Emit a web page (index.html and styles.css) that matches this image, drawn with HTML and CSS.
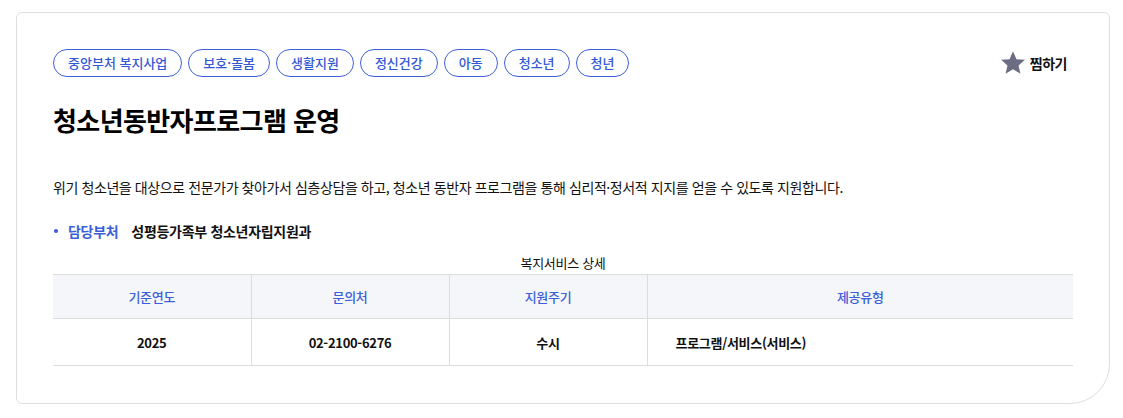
FILE: index.html
```html
<!DOCTYPE html>
<html lang="ko">
<head>
<meta charset="utf-8">
<link rel="stylesheet" href="styles.css">
</head>
<body>
<div class="card">
  <div class="top">
    <ul class="tags">
      <li class="tag">중앙부처 복지사업</li>
      <li class="tag">보호·돌봄</li>
      <li class="tag">생활지원</li>
      <li class="tag">정신건강</li>
      <li class="tag">아동</li>
      <li class="tag">청소년</li>
      <li class="tag">청년</li>
    </ul>
    <button class="fav" type="button">
      <svg class="star" width="26" height="26" viewBox="0 0 24 24"><path d="M12 1.2l3.2 7.3 7.8.6-5.9 5.1 1.8 7.7L12 17.8l-6.9 4.1 1.8-7.7-5.9-5.1 7.8-.6z" fill="#6b6e82"/></svg>
      <span>찜하기</span>
    </button>
  </div>
  <h1 class="title">청소년동반자프로그램 운영</h1>
  <p class="desc">위기 청소년을 대상으로 전문가가 찾아가서 심층상담을 하고, 청소년 동반자 프로그램을 통해 심리적·정서적 지지를 얻을 수 있도록 지원합니다.</p>
  <div class="dept">
    <span class="dot"></span>
    <span class="dept-label">담당부처</span>
    <span class="dept-value">성평등가족부 청소년자립지원과</span>
  </div>
  <table class="detail">
    <caption>복지서비스 상세</caption>
    <thead>
      <tr><th class="c1">기준연도</th><th class="c1">문의처</th><th class="c1">지원주기</th><th>제공유형</th></tr>
    </thead>
    <tbody>
      <tr><td>2025</td><td>02-2100-6276</td><td>수시</td><td class="left">프로그램/서비스(서비스)</td></tr>
    </tbody>
  </table>
</div>
</body>
</html>
```

FILE: styles.css
```css
* { box-sizing: border-box; }
html, body { margin: 0; padding: 0; background: #fff; }
body {
  font-family: "Noto Sans CJK KR", "Noto Sans", sans-serif;
  color: #111;
  padding: 12px 14px 0 16px;
}
.card {
  width: 1094px;
  height: 392px;
  border: 1px solid #dedede;
  border-radius: 6px 6px 40px 6px;
  padding: 36px 36px 0 36px;
}
.top {
  display: flex;
  justify-content: space-between;
  align-items: center;
}
.tags {
  list-style: none;
  margin: 0;
  padding: 0;
  display: flex;
  gap: 6px;
}
.tag {
  height: 28px;
  padding: 0 14px;
  border: 1px solid #3c5fd8;
  border-radius: 14px;
  color: #3358d4;
  font-size: 13px;
  font-weight: 500;
  letter-spacing: 0;
  line-height: 26px;
}
.fav {
  display: flex;
  align-items: center;
  gap: 4px;
  background: none;
  border: 0;
  padding: 0 6px 0 0;
  font-family: inherit;
  font-size: 14px;
  font-weight: 700;
  color: #111;
  letter-spacing: -0.5px;
  cursor: pointer;
}
.title {
  margin: 26px 0 0;
  font-size: 26px;
  font-weight: 700;
  line-height: 34px;
  letter-spacing: -0.6px;
  color: #000;
}
.desc {
  margin: 40px 0 0;
  font-size: 14px;
  line-height: 20px;
  letter-spacing: -0.41px;
  color: #111;
}
.dept {
  display: flex;
  align-items: center;
  margin-top: 24px;
  font-size: 14px;
  font-weight: 700;
  line-height: 20px;
  letter-spacing: -0.3px;
}
.dot {
  width: 4px;
  height: 4px;
  border-radius: 50%;
  background: #3c5fd8;
  margin: 0 10px 0 1px;
}
.dept-label { color: #3a5fd9; margin-right: 13px; }
.dept-value { color: #111; }
.detail {
  width: 100%;
  border-collapse: collapse;
  margin-top: 11px;
  font-size: 13px;
}
.detail caption {
  font-size: 13px;
  line-height: 22px;
  color: #111;
  letter-spacing: -0.3px;
}
.detail th {
  height: 44px;
  background: #f5f6fa;
  color: #3a5fd9;
  font-weight: 500;
  border-top: 1px solid #dcdcdc;
  border-bottom: 1px solid #dcdcdc;
  border-left: 1px solid #dcdcdc;
  letter-spacing: -0.3px;
}
.detail th.c1 { width: 198px; }
.detail th:first-child, .detail td:first-child { border-left: 0; }
.detail td {
  height: 47px;
  text-align: center;
  font-weight: 700;
  border-bottom: 1px solid #dcdcdc;
  border-left: 1px solid #dcdcdc;
  letter-spacing: -0.3px;
}
.detail td.left { text-align: left; padding-left: 28px; }
```
